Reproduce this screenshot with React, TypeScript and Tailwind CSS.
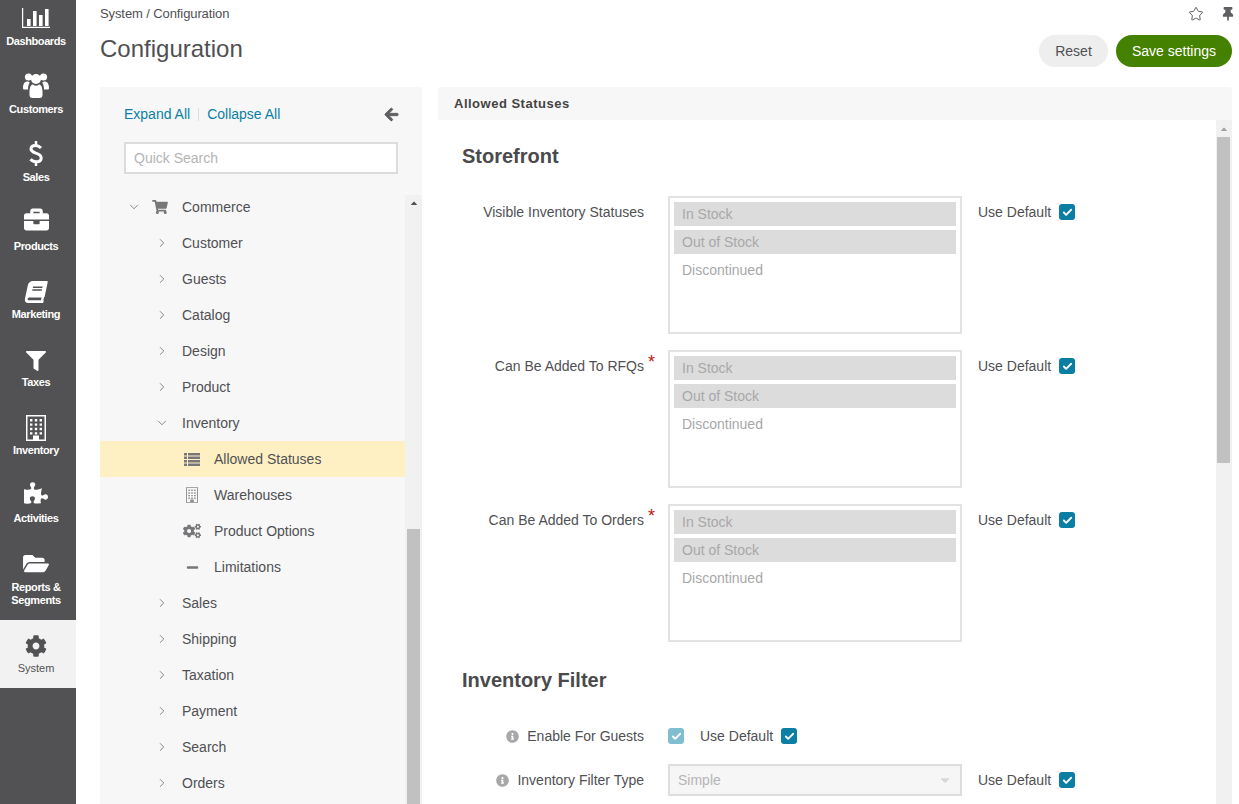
import { ChevronDown, ChevronRight, Check, Star } from "lucide-react";
import {
  FaBriefcase,
  FaBook,
  FaFilter,
  FaPuzzlePiece,
  FaFolderOpen,
  FaCog,
  FaCogs,
  FaShoppingCart,
  FaArrowLeft,
  FaThumbtack,
  FaInfoCircle,
  FaMinus,
  FaCaretUp,
  FaCaretDown,
} from "react-icons/fa";

const ChartIcon = ({ className }: { className?: string }) => (
  <svg viewBox="0 0 28 20" className={className} fill="currentColor">
    <path d="M0 0h1.2v18.8H28V20H0z" />
    <path d="M5 11h3.6v7H5zM11 3h3.6v15H11zM17 7h3.6v11H17zM23 1h3.6v17H23z" />
  </svg>
);

const UsersIcon = ({ className }: { className?: string }) => (
  <svg viewBox="0 0 26 26" className={className} fill="currentColor">
    <circle cx="5.5" cy="5" r="3.6" />
    <circle cx="20.5" cy="5" r="3.6" />
    <circle cx="13" cy="7" r="5" />
    <path d="M0 16c0-4 1.5-6.5 4.5-6.5 1 0 1.6.4 2.2.9C5.6 12.2 5 14.3 5 17.5H1.5C.5 17.5 0 17 0 16z" />
    <path d="M26 16c0-4-1.500-6.500-4.500-6.500-1 0-1.600.4-2.200.9 1.100 1.800 1.700 3.900 1.700 7.100h3.500c1 0 1.500-.5 1.500-1.500z" />
    <path d="M6.500 20c0-5 1.500-7.500 3.500-7.500 1 .8 2 1.200 3 1.200s2-.4 3-1.200c2 0 3.500 2.500 3.500 7.500v3c0 1.800-1 3-3 3H9.500c-2 0-3-1.200-3-3z" />
  </svg>
);

const DollarIcon = ({ className }: { className?: string }) => (
  <svg viewBox="0 0 14 25" className={className} fill="none" stroke="currentColor">
    <path
      strokeWidth="3"
      d="M12 7C10 5 8 4.500 6.500 4.500 3.500 4.500 2 6 2 8c0 2.500 2.500 3.300 5 4.200 3 1 5.200 2.100 5.200 4.800 0 2.500-2.200 3.800-4.900 3.800-2.300 0-4.300-.8-5.800-2.500"
    />
    <path strokeWidth="2.500" d="M7 0v4M7 21v4" />
  </svg>
);

const BuildingIcon = ({ className }: { className?: string }) => (
  <svg viewBox="0 0 20 26" className={className} fill="currentColor">
    <path fillRule="evenodd" d="M0 0h20v26H0zM1.500 1.500v23h5.500v-4h6v4h5.500v-23z" />
    <path d="M4 4h2.400v2.400H4zM8.800 4h2.400v2.400H8.800zM13.600 4H16v2.400h-2.400zM4 8.400h2.400v2.400H4zM8.800 8.400h2.400v2.400H8.800zM13.600 8.400H16v2.400h-2.400zM4 12.800h2.400v2.400H4zM8.800 12.800h2.400v2.400H8.800zM13.600 12.800H16v2.400h-2.400zM4 17.200h2.400v2.400H4zM8.800 17.200h2.400v2.400H8.800zM13.600 17.200H16v2.400h-2.400z" />
  </svg>
);

const ListIcon = ({ className }: { className?: string }) => (
  <svg viewBox="0 0 16 13" className={className} fill="currentColor">
    <path d="M0 0h3v2.500H0zM4 0h12v2.500H4zM0 3.500h3V6H0zM4 3.500h12V6H4zM0 7h3v2.500H0zM4 7h12v2.500H4zM0 10.500h3V13H0zM4 10.500h12V13H4z" />
  </svg>
);

const NAV_ITEMS = [
  { label: "Dashboards", gap: "mb-[6px]", icon: <ChartIcon className="w-[28px] h-[20px]" /> },
  { label: "Customers", gap: "mb-[4px]", icon: <UsersIcon className="w-[26px] h-[26px]" /> },
  { label: "Sales", gap: "mb-[4px]", icon: <DollarIcon className="w-[14px] h-[25px]" /> },
  { label: "Products", gap: "mb-[7px]", icon: <FaBriefcase className="w-[25px] h-[25px]" /> },
  { label: "Marketing", gap: "mb-[4px]", icon: <FaBook className="w-[22px] h-[22px] -skew-x-12" /> },
  { label: "Taxes", gap: "mb-[3px]", icon: <FaFilter className="w-[20px] h-[22px]" /> },
  { label: "Inventory", gap: "mb-[2px]", icon: <BuildingIcon className="w-[20px] h-[26px]" /> },
  { label: "Activities", gap: "mb-[6px]", icon: <FaPuzzlePiece className="w-[24px] h-[24px]" /> },
];

function Sidebar() {
  return (
    <nav className="w-[76px] shrink-0 bg-[#525254] text-white overflow-hidden">
      <div className="-mt-[13.2px]">
        {NAV_ITEMS.map((item) => (
          <div key={item.label} className="h-[68.2px] pr-[4px] flex flex-col items-center justify-end pb-[7px]">
            <div className={`flex items-end justify-center ${item.gap}`}>{item.icon}</div>
            <span className="text-[11px] leading-[14px] font-bold tracking-[-0.4px]">{item.label}</span>
          </div>
        ))}
        <div className="h-[87.6px] pr-[4px] pt-[20px] flex flex-col items-center">
          <FaFolderOpen className="w-[26px] h-[23px]" />
          <span className="text-[11px] leading-[13px] font-bold tracking-[-0.4px] text-center mt-[6px]">
            Reports &amp;
            <br />
            Segments
          </span>
        </div>
      </div>
      <div className="h-[68px] pr-[4px] bg-[#f2f2f2] text-[#525254] flex flex-col items-center pt-[15px]">
        <FaCog className="w-[22px] h-[22px]" />
        <span className="text-[11px] leading-[14px] mt-[4px]">System</span>
      </div>
    </nav>
  );
}

type TreeRow = { label: string; open?: boolean };

const TOP_ROWS: TreeRow[] = [
  { label: "Customer" },
  { label: "Guests" },
  { label: "Catalog" },
  { label: "Design" },
  { label: "Product" },
];

const BOTTOM_ROWS: TreeRow[] = [
  { label: "Sales" },
  { label: "Shipping" },
  { label: "Taxation" },
  { label: "Payment" },
  { label: "Search" },
  { label: "Orders" },
];

const LEAF_ROWS = [
  { label: "Allowed Statuses", icon: <ListIcon className="w-[16px] h-[13px]" />, active: true },
  { label: "Warehouses", icon: <BuildingIcon className="w-[12px] h-[16px] text-[#8c8c8e]" /> },
  { label: "Product Options", icon: <FaCogs className="w-[18px] h-[16px]" /> },
  { label: "Limitations", icon: <FaMinus className="w-[13px] h-[13px]" /> },
];

function Branch({ label, open }: TreeRow) {
  const Chevron = open ? ChevronDown : ChevronRight;
  return (
    <div className="h-[36px] flex items-center">
      <Chevron className="w-[14px] h-[14px] ml-[55px] mr-[13px] text-[#77777a]" strokeWidth={1.5} />
      <span>{label}</span>
    </div>
  );
}

function TreePanel() {
  return (
    <aside className="w-[322px] shrink-0 bg-[#f7f7f7] flex flex-col min-h-0">
      <div className="px-[24px] pt-[19px] h-[108px] shrink-0">
        <div className="flex items-center text-[#0b80a3] leading-[16px]">
          <span>Expand All</span>
          <span className="w-px h-[13px] bg-[#dddddd] mx-[8px]" />
          <span>Collapse All</span>
          <FaArrowLeft
            className="ml-auto mr-[-1px] w-[15px] h-[15px] text-[#5f5f62]"
            stroke="currentColor"
            strokeWidth={30}
          />
        </div>
        <div className="mt-[20px] w-[274px] h-[32px] border-2 border-[#dcdcdc] bg-white flex items-center px-[8px] text-[#b5b5b5]">
          Quick Search
        </div>
      </div>
      <div className="flex flex-1 min-h-0 overflow-hidden">
        <div className="w-[305px] shrink-0 -mt-[6px]">
          <div className="h-[36px] flex items-center">
            <ChevronDown className="w-[14px] h-[14px] ml-[27px] mr-[11px] text-[#77777a]" strokeWidth={1.5} />
            <FaShoppingCart className="w-[16px] h-[14px] text-[#77777a] mr-[14px]" />
            <span>Commerce</span>
          </div>
          {TOP_ROWS.map((row) => (
            <Branch key={row.label} {...row} />
          ))}
          <Branch label="Inventory" open />
          {LEAF_ROWS.map((row) => (
            <div
              key={row.label}
              className={`h-[36px] flex items-center ${row.active ? "bg-[#fff0c4]" : ""}`}
            >
              <span className="w-[114px] pl-[83px] shrink-0 text-[#77777a]">
                <span className="w-[18px] flex justify-center">{row.icon}</span>
              </span>
              <span>{row.label}</span>
            </div>
          ))}
          {BOTTOM_ROWS.map((row) => (
            <Branch key={row.label} {...row} />
          ))}
        </div>
        <div className="w-[17px] shrink-0 bg-[#f1f1f1] flex flex-col px-[2px]">
          <FaCaretUp className="w-[10px] h-[10px] mx-auto mt-[3px] text-[#505050]" />
          <div className="mt-[321px] flex-1 bg-[#c1c1c1]" />
        </div>
      </div>
    </aside>
  );
}

function Checkbox({ light }: { light?: boolean }) {
  return (
    <span
      className={`w-[16px] h-[16px] rounded-[3px] flex items-center justify-center text-white ${
        light ? "bg-[#80bdd0]" : "bg-[#0b7ea3]"
      }`}
    >
      <Check className="w-[11px] h-[11px]" strokeWidth={4} />
    </span>
  );
}

function UseDefault() {
  return (
    <div className="flex items-center gap-[8px]">
      <span>Use Default</span>
      <Checkbox />
    </div>
  );
}

function StatusRow({ label, required }: { label: string; required?: boolean }) {
  return (
    <div className="flex mb-[16px]">
      <div className="w-[182px] shrink-0 text-right pt-[8px] leading-[16px] relative">
        {label}
        {required && (
          <span className="absolute right-[-11px] top-[3px] text-[#c0180c] text-[18px] leading-[18px]">*</span>
        )}
      </div>
      <div className="ml-[24px] w-[294px] h-[138px] border-2 border-[#e2e2e2] p-[4px] text-[#a8a8a8] shrink-0">
        <div className="h-[24px] mb-[4px] bg-[#dcdcdc] px-[8px] leading-[24px]">In Stock</div>
        <div className="h-[24px] mb-[4px] bg-[#dcdcdc] px-[8px] leading-[24px]">Out of Stock</div>
        <div className="h-[24px] px-[8px] leading-[24px]">Discontinued</div>
      </div>
      <div className="ml-[16px] pt-[8px] leading-[16px]">
        <UseDefault />
      </div>
    </div>
  );
}

function FormPanel() {
  return (
    <section className="w-[794px] shrink-0 flex flex-col min-h-0">
      <div className="h-[33px] shrink-0 bg-[#f7f7f7] rounded-t-[3px] px-[16px] flex items-center font-bold text-[13px] text-[#444444] tracking-[0.5px]">
        Allowed Statuses
      </div>
      <div className="flex flex-1 min-h-0">
        <div className="flex-1 pl-[24px] overflow-hidden">
          <h2 className="text-[20px] leading-[24px] font-bold mt-[24px] mb-[28px] text-[#4a4a4c]">Storefront</h2>
          <StatusRow label="Visible Inventory Statuses" />
          <StatusRow label="Can Be Added To RFQs" required />
          <StatusRow label="Can Be Added To Orders" required />
          <h2 className="text-[20px] leading-[24px] font-bold mt-[26px] mb-[36px] text-[#4a4a4c]">Inventory Filter</h2>
          <div className="flex items-center h-[16px] mb-[20px]">
            <div className="w-[182px] shrink-0 flex justify-end items-center gap-[8px]">
              <FaInfoCircle className="w-[13px] h-[13px] text-[#a8a8a8]" />
              <span>Enable For Guests</span>
            </div>
            <div className="ml-[24px]">
              <Checkbox light />
            </div>
            <div className="ml-[16px]">
              <UseDefault />
            </div>
          </div>
          <div className="flex items-center h-[32px]">
            <div className="w-[182px] shrink-0 flex justify-end items-center gap-[8px]">
              <FaInfoCircle className="w-[13px] h-[13px] text-[#a8a8a8]" />
              <span>Inventory Filter Type</span>
            </div>
            <div className="ml-[24px] w-[294px] h-[32px] border-2 border-[#dedede] bg-[#f6f6f6] flex items-center justify-between pl-[8px] pr-[8px] text-[#b5b5b5] shrink-0">
              <span>Simple</span>
              <FaCaretDown className="w-[14px] h-[14px] text-[#d8d8d8]" />
            </div>
            <div className="ml-[16px]">
              <UseDefault />
            </div>
          </div>
        </div>
        <div className="w-[16px] shrink-0 bg-[#f1f1f1] flex flex-col pl-px">
          <FaCaretUp className="w-[10px] h-[10px] ml-[2px] mt-[4px] text-[#a3a3a3]" />
          <div className="mt-[3px] w-[13px] h-[326px] bg-[#c1c1c1]" />
        </div>
      </div>
    </section>
  );
}

export default function App() {
  return (
    <div className="w-[1239px] h-[804px] flex overflow-hidden bg-white text-[14px] text-[#505054] [font-family:'Liberation_Sans',Arial,sans-serif]">
      <Sidebar />
      <main className="flex-1 min-w-0 pl-[24px] pr-[7px] flex flex-col">
        <header className="h-[87px] shrink-0 relative">
          <div className="pt-[6px] text-[13px] leading-[15px] tracking-[-0.1px]">System / Configuration</div>
          <h1 className="text-[24px] leading-[28px] mt-[14px] text-[#505054]">Configuration</h1>
          <div className="absolute right-[-3px] top-[6px] flex items-center gap-[17px]">
            <Star className="w-[16px] h-[16px] text-[#5f5f62]" strokeWidth={1.5} />
            <FaThumbtack className="w-[14px] h-[14px] text-[#5f5f62]" />
          </div>
          <div className="absolute right-0 top-[35px] flex gap-[8px]">
            <div className="w-[69px] h-[32px] rounded-full bg-[#eeeeee] flex items-center justify-center">Reset</div>
            <div className="w-[116px] h-[32px] rounded-full bg-[#458100] text-white flex items-center justify-center">
              Save settings
            </div>
          </div>
        </header>
        <div className="flex flex-1 min-h-0 gap-[16px]">
          <TreePanel />
          <FormPanel />
        </div>
      </main>
    </div>
  );
}
